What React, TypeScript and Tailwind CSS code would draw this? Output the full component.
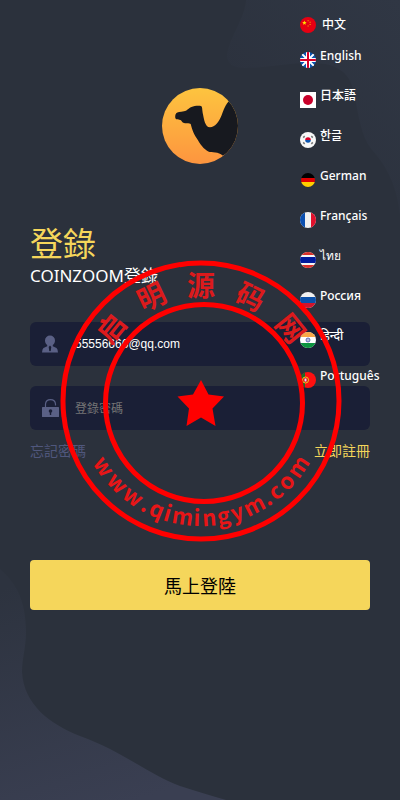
import { useState } from 'react';
import type { ReactNode } from 'react';

const flags: Record<string, ReactNode> = {
  cn: (
    <>
      <rect width="16" height="16" fill="#e60012" />
      <path d="M4.4 3.600l.6 1.500 1.600.1-1.200 1 .4 1.600-1.400-.9-1.400.9.4-1.600-1.200-1 1.600-.1z" fill="#ffe100" />
      <path d="M7.600 3.200h1v1h-1zM9.600 4.800h1v1h-1zM9.600 7h1v1h-1zM7.600 8.600h1v1h-1z" fill="#f6b800" />
    </>
  ),
  gb: (
    <>
      <rect width="16" height="16" fill="#0b55b0" />
      <path d="M2 2l12 12M14 2L2 14" stroke="#fff" strokeWidth="1.800" />
      <path d="M8 0v16M0 8h16" stroke="#fff" strokeWidth="4" />
      <path d="M8 0v16M0 8h16" stroke="#d80027" strokeWidth="2" />
    </>
  ),
  jp: (
    <>
      <rect width="16" height="16" fill="#fff" />
      <circle cx="8" cy="8" r="5" fill="#c8002a" />
    </>
  ),
  kr: (
    <>
      <rect width="16" height="16" fill="#f7f7f7" />
      <path d="M5.200 8a2.800 2.800 0 0 1 5.600 0z" fill="#d80027" />
      <path d="M5.200 8a2.800 2.800 0 0 0 5.600 0z" fill="#0b55b0" />
      <path d="M3.200 5.600l1.500-1.500M11.300 4.100l1.500 1.500M3.200 10.400l1.500 1.500M11.300 11.900l1.500-1.500" stroke="#777" strokeWidth="1.500" />
    </>
  ),
  de: (
    <>
      <rect width="16" height="6" fill="#000" />
      <rect y="6" width="16" height="4" fill="#e00000" />
      <rect y="10" width="16" height="6" fill="#ffce00" />
    </>
  ),
  fr: (
    <>
      <rect width="16" height="16" fill="#f0f0f0" />
      <rect width="5" height="16" fill="#0b4fb0" />
      <rect x="11" width="5" height="16" fill="#e0102c" />
    </>
  ),
  th: (
    <>
      <rect width="16" height="16" fill="#f4f4f4" />
      <rect width="16" height="3" fill="#d8302a" />
      <rect y="5" width="16" height="6" fill="#001a9c" />
      <rect y="13" width="16" height="3" fill="#d8302a" />
    </>
  ),
  ru: (
    <>
      <rect width="16" height="16" fill="#f0f0f0" />
      <rect y="5" width="16" height="6" fill="#0b4fa8" />
      <rect y="11" width="16" height="5" fill="#d0142c" />
    </>
  ),
  in: (
    <>
      <rect width="16" height="16" fill="#fff" />
      <rect width="16" height="5" fill="#f8a848" />
      <rect y="11" width="16" height="5" fill="#0c9440" />
      <circle cx="8" cy="8" r="2" fill="#b9bfe0" stroke="#4856a8" strokeWidth="0.8" />
    </>
  ),
  pt: (
    <>
      <rect width="16" height="16" fill="#ff1010" />
      <rect width="5" height="16" fill="#186c28" />
      <circle cx="5.500" cy="8" r="3" fill="#e00010" stroke="#e8d020" strokeWidth="1" />
      <rect x="4.500" y="6.500" width="2" height="3" fill="#dfe8ff" />
    </>
  ),
};

const languages = [
  { code: 'en', flag: 'gb', label: 'English' },
  { code: 'ja', flag: 'jp', label: '日本語' },
  { code: 'ko', flag: 'kr', label: '한글' },
  { code: 'de', flag: 'de', label: 'German' },
  { code: 'fr', flag: 'fr', label: 'Français' },
  { code: 'th', flag: 'th', label: 'ไทย' },
  { code: 'ru', flag: 'ru', label: 'Россия' },
  { code: 'hi', flag: 'in', label: 'हिन्दी' },
  { code: 'pt', flag: 'pt', label: 'Português' },
];

function Flag({ name }: { name: string }) {
  const radius = name === 'de' ? 7 : 8;
  return (
    <svg className="size-4 shrink-0" viewBox="0 0 16 16" aria-hidden="true">
      <clipPath id={`flag-${name}`}>
        {name === 'jp' ? <rect width="16" height="16" /> : <circle cx="8" cy="8" r={radius} />}
      </clipPath>
      <g clipPath={`url(#flag-${name})`}>{flags[name]}</g>
    </svg>
  );
}

function LanguageMenu() {
  return (
    <nav aria-label="Language" className="absolute top-4 right-0 w-[100px] text-xs text-white">
      <button type="button" className="flex h-[18px] items-center gap-1.5 font-medium">
        <Flag name="cn" />
        <span lang="zh">中文</span>
      </button>
      <ul className="mt-3">
        {languages.map(({ code, flag, label }) => (
          <li key={code} className="h-10">
            <button type="button" className="flex items-start gap-1 font-medium">
              <span className="pt-1.5">
                <Flag name={flag} />
              </span>
              <span lang={code} className="leading-5">
                {label}
              </span>
            </button>
          </li>
        ))}
      </ul>
    </nav>
  );
}

function Backdrop() {
  return (
    <svg
      className="pointer-events-none absolute inset-0 size-full"
      viewBox="0 0 400 800"
      preserveAspectRatio="none"
      aria-hidden="true"
    >
      <defs>
        <linearGradient id="corner" x1="0.3" y1="0" x2="0.6" y2="1">
          <stop offset="0" stopColor="#2d333f" />
          <stop offset="1" stopColor="#3a3f52" />
        </linearGradient>
        <linearGradient id="cloud" x1="1" y1="0" x2="0.4" y2="0.7">
          <stop offset="0" stopColor="#303744" />
          <stop offset="1" stopColor="#2c323e" />
        </linearGradient>
      </defs>
      <path
        d="M246 0C245 18 229 38 227 55C227 64 233 68 245 68C270 68 300 60 325 64C345 68 352 80 354 94C359 115 360 135 372 150C390 170 397 190 400 215V0Z"
        fill="url(#cloud)"
      />
      <path
        d="M0 569C16 583 26 600 26 632C26 648 22 658 22 672C24 705 50 724 80 736C120 750 150 775 180 786Q205 794 226 800H0Z"
        fill="url(#corner)"
      />
    </svg>
  );
}

function Logo() {
  return (
    <svg className="size-[76px]" viewBox="0 0 76 76" role="img" aria-label="COINZOOM">
      <defs>
        <linearGradient id="sun" x1="0" y1="0" x2="0" y2="1">
          <stop offset="0" stopColor="#fdc43f" />
          <stop offset="1" stopColor="#fd953f" />
        </linearGradient>
        <clipPath id="disc">
          <circle cx="38" cy="38" r="38" />
        </clipPath>
      </defs>
      <circle cx="38" cy="38" r="38" fill="url(#sun)" />
      <path
        clipPath="url(#disc)"
        d="M66.500 13.500C62 19 61 24 59.500 27.500C57 34 53 39.300 48 39.300C43 39.300 42 31 40.700 25C40 21 40.500 18.500 39 18C36 17.500 32 18 29.500 19C26 20.500 25 23 22 23.200C18 23.800 15.500 24 14.200 25.200C13 26.500 13 29.500 13.500 30.500C14.500 32 17 31.500 18.500 32C20 33 20 34.500 22 35C24.500 35.800 27 34.500 28.700 36C29.500 39 31 45 34.700 50.300C38 56 42 61.500 46.300 63.500C49.500 65 57 63.500 60.500 67.500L76 62V13.500Z"
        fill="#17191f"
      />
    </svg>
  );
}

function UserIcon() {
  return (
    <svg className="size-[18px] shrink-0" viewBox="0 0 18 18" aria-hidden="true">
      <path
        d="M9 .5a5 5 0 0 1 5 5c0 2-1 3.600-2.200 4.500v1.200L15.500 13q1.200.8 1.500 4.500H1Q1.300 13.800 2.500 13l3.700-1.800V10C5 9.100 4 7.500 4 5.500a5 5 0 0 1 5-5Z"
        fill="#5a6085"
      />
      <path d="M9 10.500l1.300 1.500-.5 3.500L9 16.500l-.8-1-.5-3.500z" fill="#1a1f36" />
    </svg>
  );
}

function LockIcon() {
  return (
    <svg className="size-[18px] shrink-0" viewBox="0 0 18 18" aria-hidden="true">
      <path d="M4.500 8V5C5-.8 14-.8 14.500 5V6.500" fill="none" stroke="#5a6085" strokeWidth="1.200" />
      <rect x="1" y="8" width="17" height="10" rx="0.5" fill="#5a6085" />
      <circle cx="9.500" cy="12" r="1.800" fill="#1a1f36" />
      <path d="M9.500 12v4" stroke="#1a1f36" strokeWidth="1.400" />
    </svg>
  );
}

function Stamp() {
  return (
    <svg
      className="pointer-events-none absolute top-[260px] left-1/2 ml-px size-[282px] -translate-x-1/2"
      viewBox="0 0 282 282"
      role="img"
      aria-label="启明源码网 www.qimingym.com"
    >
      <circle cx="141" cy="141" r="138" fill="none" stroke="#f00" strokeWidth="5" />
      <circle cx="144" cy="143" r="98.500" fill="none" stroke="#f00" strokeWidth="5" />
      <path
        d="M141 120l7.500 14.500 15.500 2-11.500 12 3 17.500-14.500-8.500-14.500 8.500 2.500-17.500-11.500-12 15.500-2z"
        fill="#f00"
      />
      <g
        fill="#dc1a1c"
        className="font-['Noto_Sans_CJK_SC',sans-serif] text-[28px] font-bold"
        textAnchor="middle"
      >
        {['启', '明', '源', '码', '网'].map((glyph, i) => (
          <text key={glyph} x="141" y="36" transform={`rotate(${(i - 2) * 25.5} 141 141)`}>
            {glyph}
          </text>
        ))}
      </g>
      <g
        fill="#e81517"
        className="font-['Noto_Sans_CJK_SC',sans-serif] text-[22px] font-bold"
        textAnchor="middle"
      >
        {[
          ['w', 56], ['w', 45.5], ['w', 35.5], ['.', 28], ['q', 22], ['i', 16.5], ['m', 9],
          ['i', 2], ['n', -4], ['g', -11], ['y', -18], ['m', -27], ['.', -34],
          ['c', -39.5], ['o', -46.5], ['m', -56],
        ].map(([glyph, angle], i) => (
          <text key={i} x="141" y="266" transform={`rotate(${angle} 141 141)`}>
            {glyph}
          </text>
        ))}
      </g>
    </svg>
  );
}

export default function App() {
  const [account, setAccount] = useState('55556666@qq.com');
  const [password, setPassword] = useState('');

  return (
    <div className="border-r border-white bg-[#2b313c] font-['Noto_Sans','Noto_Sans_CJK_TC',sans-serif]">
      <div className="relative min-h-screen overflow-hidden">
        <Backdrop />
        <main className="relative px-[30px] pt-[88px]">
          <div className="flex justify-center">
            <Logo />
          </div>
          <h1 className="mt-[60px] text-[33px] leading-10 text-[#f5d65b]">登錄</h1>
          <p className="text-[17px] leading-6 text-white">COINZOOM登錄</p>
          <form onSubmit={(event) => event.preventDefault()}>
            <div className="mt-[34px] flex h-11 items-center gap-4 rounded-md bg-[#1a1f36] pl-[11px]">
              <UserIcon />
              <input
                aria-label="帳號"
                type="text"
                value={account}
                onChange={(event) => setAccount(event.target.value)}
                className="h-full min-w-0 flex-1 bg-transparent font-['Liberation_Sans',sans-serif] text-xs text-white outline-none"
              />
            </div>
            <div className="mt-5 flex h-11 items-center gap-4 rounded-md bg-[#1a1f36] pl-[11px]">
              <LockIcon />
              <input
                aria-label="登錄密碼"
                type="password"
                placeholder="登錄密碼"
                value={password}
                onChange={(event) => setPassword(event.target.value)}
                className="h-full min-w-0 flex-1 bg-transparent text-xs text-white outline-none placeholder:text-[#757575]"
              />
            </div>
            <div className="mt-2.5 flex justify-between text-sm leading-[22px]">
              <a href="#forgot" className="text-[#50577c]">忘記密碼</a>
              <a href="#register" className="text-[#f5d65b]">立即註冊</a>
            </div>
            <button
              type="submit"
              className="mt-[98px] h-[50px] w-full rounded bg-[#f5d65b] pt-0.5 text-lg text-black"
            >
              馬上登陸
            </button>
          </form>
        </main>
        <LanguageMenu />
        <Stamp />
      </div>
    </div>
  );
}
